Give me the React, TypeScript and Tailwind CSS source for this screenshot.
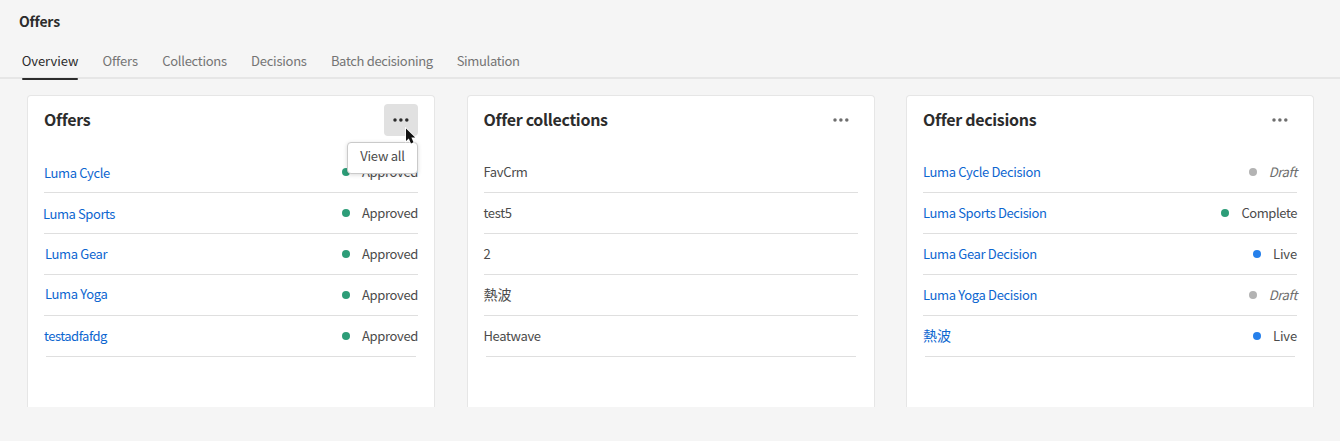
import React from "react";

type Status = "Approved" | "Draft" | "Complete" | "Live";

interface Item {
  name: string;
  nameClass?: string;
  status?: Status;
}

interface CardData {
  title: string;
  link: boolean;
  open?: boolean;
  items: Item[];
}

const tabs = [
  { label: "Overview", className: "w-14 tracking-[-0.05px] text-[#2c2c2c]", active: true },
  { label: "Offers", className: "w-[35px] tracking-[-0.15px] text-[#747474]" },
  { label: "Collections", className: "w-16 tracking-[-0.29px] text-[#747474]" },
  { label: "Decisions", className: "w-[55px] tracking-[-0.26px] text-[#747474]" },
  { label: "Batch decisioning", className: "w-[101px] tracking-[-0.33px] text-[#747474]" },
  { label: "Simulation", className: "w-16 tracking-[-0.33px] text-[#747474]" },
];

const cards: CardData[] = [
  {
    title: "Offers",
    link: true,
    open: true,
    items: [
      { name: "Luma Cycle", nameClass: "pt-0.5", status: "Approved" },
      { name: "Luma Sports", nameClass: "pt-0.5 -ml-px tracking-[-0.42px]", status: "Approved" },
      { name: "Luma Gear", nameClass: "pl-px", status: "Approved" },
      { name: "Luma Yoga", nameClass: "pl-px pb-0.5", status: "Approved" },
      { name: "testadfafdg", nameClass: "tracking-[-0.5px]", status: "Approved" },
    ],
  },
  {
    title: "Offer collections",
    link: false,
    items: [
      { name: "FavCrm" },
      { name: "test5" },
      { name: "2" },
      { name: "熱波", nameClass: "pb-0.5 text-[14px] tracking-normal" },
      { name: "Heatwave" },
    ],
  },
  {
    title: "Offer decisions",
    link: true,
    items: [
      { name: "Luma Cycle Decision", status: "Draft" },
      { name: "Luma Sports Decision", nameClass: "tracking-[-0.39px]", status: "Complete" },
      { name: "Luma Gear Decision", status: "Live" },
      { name: "Luma Yoga Decision", status: "Draft" },
      { name: "熱波", nameClass: "pb-0.5 text-[14px] tracking-normal", status: "Live" },
    ],
  },
];

const dotColor: Record<Status, string> = {
  Approved: "bg-[#2d9d78]",
  Complete: "bg-[#2d9d78]",
  Draft: "bg-[#b3b3b3]",
  Live: "bg-[#2680eb]",
};

const labelClass: Record<Status, string> = {
  Approved: "",
  Complete: "tracking-[-0.42px]",
  Draft: "italic text-[#6e6e6e]",
  Live: "tracking-[-0.15px]",
};

function MoreIcon() {
  return (
    <svg width="18" height="18" viewBox="0 0 18 18" fill="currentColor" aria-hidden="true">
      <circle cx="3" cy="9" r="1.75" />
      <circle cx="8.9" cy="9" r="1.75" />
      <circle cx="14.8" cy="9" r="1.75" />
    </svg>
  );
}

function Pointer() {
  return (
    <svg className="absolute left-5 top-[23px] z-20" width="14" height="19" viewBox="0 0 14 19" aria-hidden="true">
      <path
        d="M2 1.5V14l2.8-2.6 2.2 5 2.5-1.1-2.1-4.7h3.8z"
        fill="#111"
        stroke="#fff"
        strokeWidth="1.6"
        paintOrder="stroke"
      />
    </svg>
  );
}

function StatusLabel({ status }: { status: Status }) {
  return (
    <span className="flex items-center">
      <span className={`mr-3 size-2 rounded-full ${dotColor[status]}`} />
      <span className={labelClass[status]}>{status}</span>
    </span>
  );
}

function Card({ card }: { card: CardData }) {
  return (
    <section className="h-[312px] rounded-t border border-b-0 border-[#e6e6e6] bg-white px-4">
      <header className="flex h-12 items-center justify-between">
        <h2 className="pb-0.5 text-[16px] font-bold tracking-[-0.3px] text-[#2c2c2c]">{card.title}</h2>
        <div
          className={`relative flex h-8 w-[34px] items-center justify-center rounded ${
            card.open ? "bg-[#e1e1e1] text-[#2c2c2c]" : "text-[#6e6e6e]"
          }`}
        >
          <MoreIcon />
          {card.open && (
            <>
              <div className="absolute right-0 top-[38px] z-10 flex h-8 w-[71px] items-center justify-center rounded border border-[#cacaca] bg-white pb-1 tracking-[-0.25px] text-[#4b4b4b] shadow-[0_1px_4px_rgba(0,0,0,0.15)]">
                View all
              </div>
              <Pointer />
            </>
          )}
        </div>
      </header>
      <ul className="pt-2">
        {card.items.map((item, i) => (
          <li key={i}>
            <div className="flex h-10 items-center justify-between">
              <span className={`${card.link ? "text-[#0d66d0]" : ""} ${item.nameClass ?? ""}`}>{item.name}</span>
              {item.status && <StatusLabel status={item.status} />}
            </div>
            <div className={`h-px bg-[#dfdfdf] ${i === card.items.length - 1 ? "mx-0.5" : ""}`} />
          </li>
        ))}
      </ul>
    </section>
  );
}

export default function App() {
  return (
    <main className="h-[441px] w-[1340px] overflow-hidden whitespace-nowrap bg-[#f5f5f5] font-['Noto_Sans_CJK_JP',sans-serif] text-[13px] leading-5 tracking-[-0.35px] text-[#4b4b4b]">
      <h1 className="h-11 pl-[19px] pt-[11px] text-[14px] font-bold tracking-[-0.2px] text-[#2c2c2c]">Offers</h1>
      <nav className="flex h-[35px] gap-[24.8px] border-b-2 border-[#e6e6e6] pl-[21.7px]">
        {tabs.map((tab) => (
          <div key={tab.label} className={`relative h-[35px] pt-[7px] ${tab.className}`}>
            {tab.label}
            {tab.active && <span className="absolute inset-x-0 -bottom-px h-[2.5px] rounded-full bg-[#2c2c2c]" />}
          </div>
        ))}
      </nav>
      <div className="grid grid-cols-[408px_408px_408px] gap-[31.5px] pl-[27px] pt-4">
        {cards.map((card) => (
          <Card key={card.title} card={card} />
        ))}
      </div>
    </main>
  );
}
